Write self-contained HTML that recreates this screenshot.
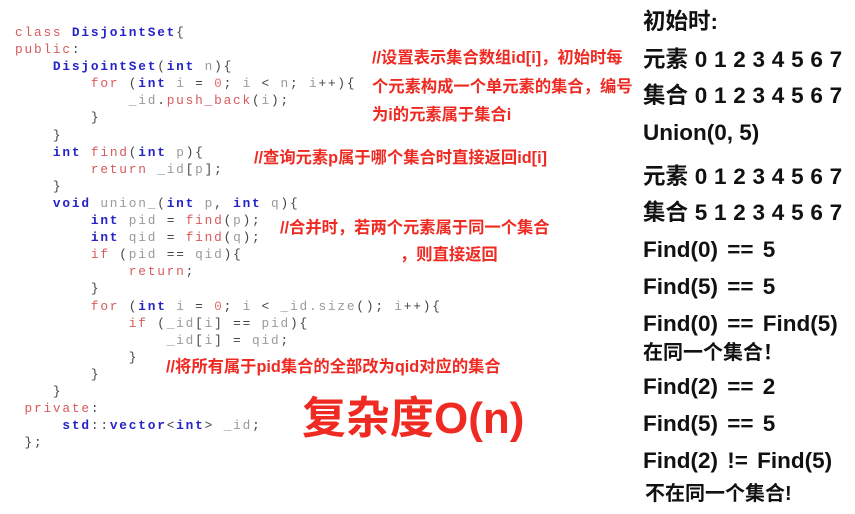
<!DOCTYPE html>
<html><head><meta charset="utf-8"><style>
html,body{margin:0;padding:0;background:#fff;width:855px;height:514px;overflow:hidden;position:relative}
pre{position:absolute;left:15px;top:24px;margin:0;font-family:"Liberation Mono",monospace;font-size:12.8px;letter-spacing:1.8px;line-height:17.1px;color:#444}
.k{color:#d85a5a}.t{color:#2424c8;font-weight:bold}.v{color:#9a9a9a}.n{color:#e07070}
.r{position:absolute;color:#ee2a22;font-family:"Liberation Sans","Noto Sans CJK SC",sans-serif;font-weight:bold;font-size:16.3px;white-space:nowrap;line-height:20px}
.b{position:absolute;left:643px;color:#111;font-family:"Liberation Sans","Noto Sans CJK SC",sans-serif;font-weight:bold;font-size:22.5px;white-space:nowrap;line-height:26px;word-spacing:3px}
.d{word-spacing:0.5px}
</style></head><body>
<pre><span class="k">class</span> <span class="t">DisjointSet</span>{
<span class="k">public</span>:
    <span class="t">DisjointSet</span>(<span class="t">int</span> <span class="v">n</span>){
        <span class="k">for</span> (<span class="t">int</span> <span class="v">i</span> = <span class="n">0</span>; <span class="v">i</span> &lt; <span class="v">n</span>; <span class="v">i</span>++){
            <span class="v">_id</span>.<span class="k">push_back</span>(<span class="v">i</span>);
        }
    }
    <span class="t">int</span> <span class="k">find</span>(<span class="t">int</span> <span class="v">p</span>){
        <span class="k">return</span> <span class="v">_id</span>[<span class="v">p</span>];
    }
    <span class="t">void</span> <span class="v">union_</span>(<span class="t">int</span> <span class="v">p</span>, <span class="t">int</span> <span class="v">q</span>){
        <span class="t">int</span> <span class="v">pid</span> = <span class="k">find</span>(<span class="v">p</span>);
        <span class="t">int</span> <span class="v">qid</span> = <span class="k">find</span>(<span class="v">q</span>);
        <span class="k">if</span> (<span class="v">pid</span> == <span class="v">qid</span>){
            <span class="k">return</span>;
        }
        <span class="k">for</span> (<span class="t">int</span> <span class="v">i</span> = <span class="n">0</span>; <span class="v">i</span> &lt; <span class="v">_id.size</span>(); <span class="v">i</span>++){
            <span class="k">if</span> (<span class="v">_id</span>[<span class="v">i</span>] == <span class="v">pid</span>){
                <span class="v">_id</span>[<span class="v">i</span>] = <span class="v">qid</span>;
            }
        }
    }
 <span class="k">private</span>:
     <span class="t">std</span>::<span class="t">vector</span>&lt;<span class="t">int</span>&gt; <span class="v">_id</span>;
 };</pre>
<div class="r" style="left:372px;top:48px">//设置表示集合数组id[i]，初始时每</div>
<div class="r" style="left:372px;top:77px">个元素构成一个单元素的集合，编号</div>
<div class="r" style="left:372px;top:105px">为i的元素属于集合i</div>
<div class="r" style="left:254px;top:148px">//查询元素p属于哪个集合时直接返回id[i]</div>
<div class="r" style="left:280px;top:218px">//合并时，若两个元素属于同一个集合</div>
<div class="r" style="left:400px;top:245px">，则直接返回</div>
<div class="r" style="left:166px;top:357px">//将所有属于pid集合的全部改为qid对应的集合</div>
<div class="r" style="left:302px;top:394px;font-size:44px;line-height:50px">复杂度O(n)</div>
<div class="b" style="top:9px">初始时:</div>
<div class="b d" style="top:47px">元素 0 1 2 3 4 5 6 7</div>
<div class="b d" style="top:83px">集合 0 1 2 3 4 5 6 7</div>
<div class="b" style="top:120px;word-spacing:0">Union(0, 5)</div>
<div class="b d" style="top:164px">元素 0 1 2 3 4 5 6 7</div>
<div class="b d" style="top:200px">集合 5 1 2 3 4 5 6 7</div>
<div class="b" style="top:237px">Find(0) == 5</div>
<div class="b" style="top:274px">Find(5) == 5</div>
<div class="b" style="top:311px">Find(0) == Find(5)</div>
<div class="b" style="top:340px;font-size:20px">在同一个集合！</div>
<div class="b" style="top:374px">Find(2) == 2</div>
<div class="b" style="top:411px">Find(5) == 5</div>
<div class="b" style="top:448px">Find(2) != Find(5)</div>
<div class="b" style="top:481px;font-size:20px;left:645px">不在同一个集合!</div>
</body></html>
